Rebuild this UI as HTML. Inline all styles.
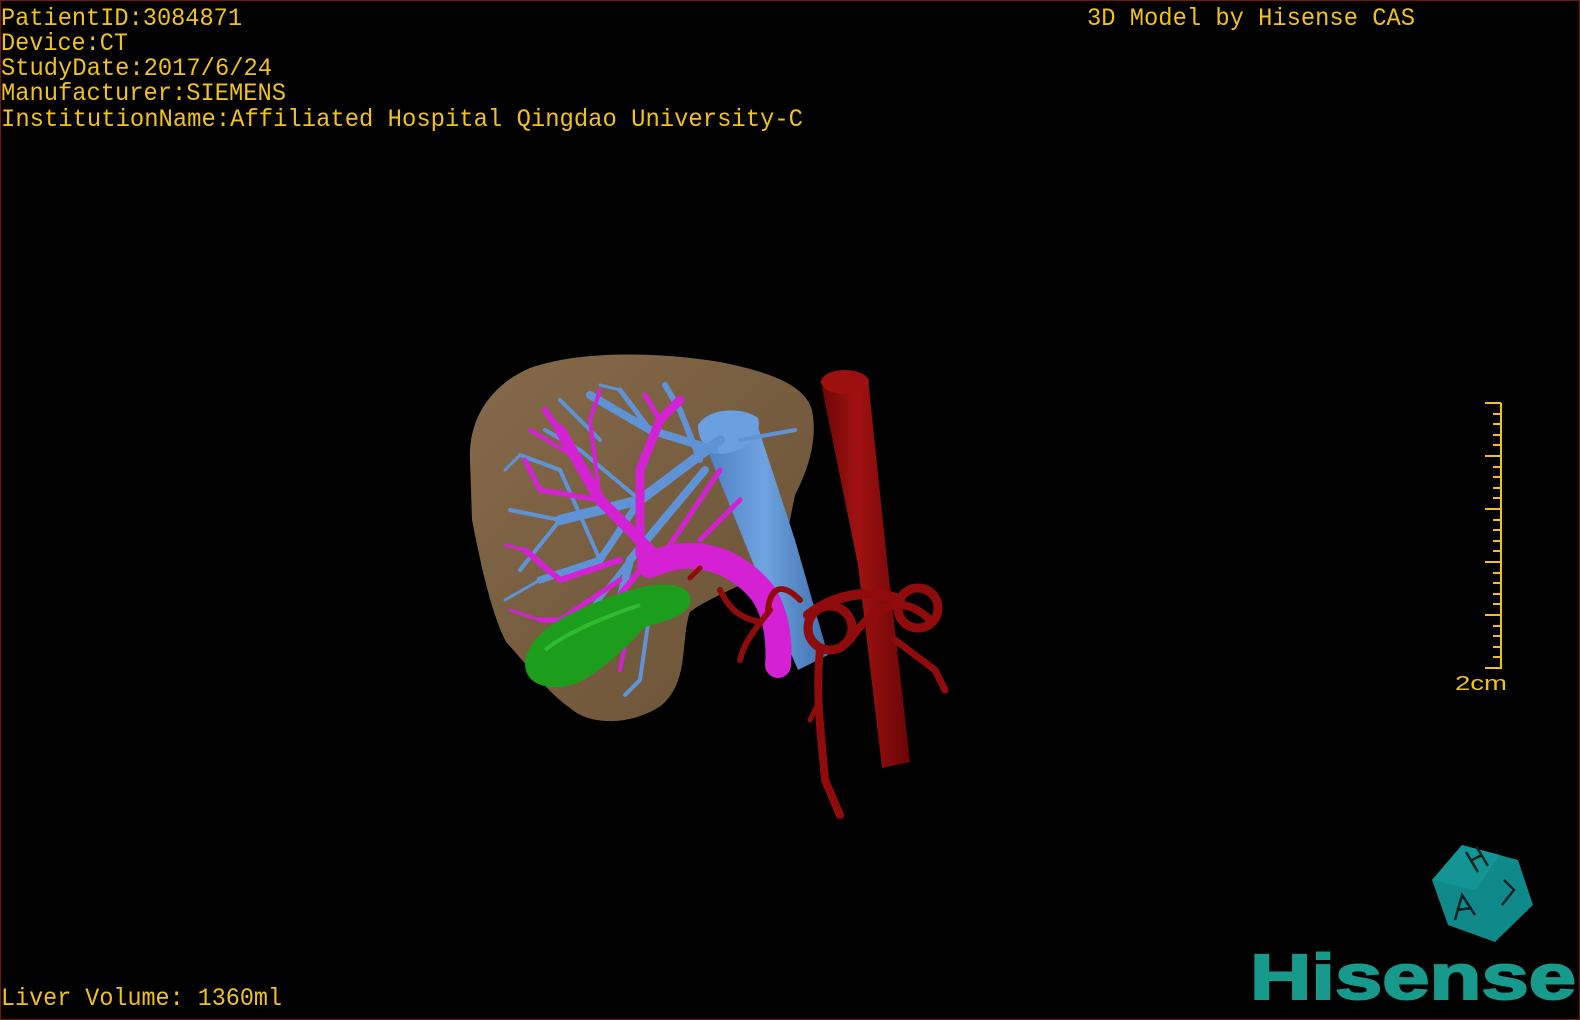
<!DOCTYPE html>
<html><head><meta charset="utf-8"><style>
html,body{margin:0;padding:0;background:#000;}
body{width:1580px;height:1020px;overflow:hidden;position:relative;}
.frame{position:absolute;left:0;top:0;width:1578px;height:1018px;border:1px solid #7a1414;}
svg{position:absolute;left:0;top:0;}
.t{font-family:"Liberation Mono",monospace;font-size:25px;fill:#f2c21c;}
</style></head><body>
<svg width="1580" height="1020" viewBox="0 0 1580 1020">
<defs>
<linearGradient id="liv" x1="0" y1="0" x2="1" y2="1"><stop offset="0" stop-color="#85694a"/><stop offset="1" stop-color="#6a5236"/></linearGradient>
<linearGradient id="ao" x1="0" y1="0" x2="1" y2="0"><stop offset="0" stop-color="#6e0606"/><stop offset="0.4" stop-color="#a01212"/><stop offset="1" stop-color="#6a0505"/></linearGradient>
<linearGradient id="bl" x1="0" y1="0" x2="1" y2="0"><stop offset="0" stop-color="#4a7cc0"/><stop offset="0.5" stop-color="#6fa3e0"/><stop offset="1" stop-color="#3f6fae"/></linearGradient>
</defs>
<text class="t" x="1" y="25" textLength="241" lengthAdjust="spacingAndGlyphs">PatientID:3084871</text>
<text class="t" x="1" y="50" textLength="127" lengthAdjust="spacingAndGlyphs">Device:CT</text>
<text class="t" x="1" y="75" textLength="271" lengthAdjust="spacingAndGlyphs">StudyDate:2017/6/24</text>
<text class="t" x="1" y="100" textLength="285" lengthAdjust="spacingAndGlyphs">Manufacturer:SIEMENS</text>
<text class="t" x="1" y="126" textLength="802" lengthAdjust="spacingAndGlyphs">InstitutionName:Affiliated Hospital Qingdao University-C</text>
<text class="t" x="1087" y="25" textLength="328" lengthAdjust="spacingAndGlyphs">3D Model by Hisense CAS</text>
<text class="t" x="1" y="1005" textLength="281" lengthAdjust="spacingAndGlyphs">Liver Volume: 1360ml</text>

<path d="M470,460 C468,420 490,385 530,368 C580,350 660,352 720,362 C770,372 805,385 812,410 C818,440 808,470 795,495 L782,560 C760,580 712,595 690,612 C680,640 690,680 662,705 C632,726 590,726 570,708 C545,690 530,668 506,642 C490,610 480,560 472,520 Z" fill="url(#liv)"/>

<path d="M700,432 L755,418 L795,540 L828,655 L798,670 L768,600 Z" fill="url(#bl)"/>
<path d="M698,425 C708,408 742,406 758,418 C763,434 746,452 722,454 C706,452 698,440 698,425 Z" fill="#6a9fe0"/>
<g stroke="#5f93d6" fill="none" stroke-linecap="round">
<path d="M720,440 L640,500 L560,520" stroke-width="10"/>
<path d="M640,500 L600,560 L540,580" stroke-width="7"/>
<path d="M715,450 L650,430 L590,395" stroke-width="8"/>
<path d="M650,430 L620,390" stroke-width="5"/>
<path d="M700,460 L680,410 L665,385" stroke-width="6"/>
<path d="M705,470 L630,560 L610,640" stroke-width="8"/>
<path d="M630,560 L575,630 L555,660" stroke-width="5"/>
<path d="M560,520 L510,510" stroke-width="4"/>
<path d="M560,520 L520,570" stroke-width="4"/>
<path d="M600,560 L560,470 L520,455" stroke-width="4"/>
<path d="M640,500 L580,450 L545,430" stroke-width="4"/>
<path d="M740,440 L795,430" stroke-width="4"/>
<path d="M650,610 L640,680 L625,695" stroke-width="4"/>
<path d="M560,400 L600,440" stroke-width="4"/>
<path d="M540,580 L505,600" stroke-width="3"/>
<path d="M620,390 L600,385" stroke-width="3"/>
<path d="M520,455 L505,470" stroke-width="3"/>
</g>
<g stroke="#d321d3" fill="none" stroke-linecap="round">
<path d="M650,565 C695,545 735,560 762,592 C776,612 780,640 778,665" stroke-width="26"/>
<path d="M660,560 L600,500 L560,430" stroke-width="11"/>
<path d="M600,500 L580,460 L545,410" stroke-width="6"/>
<path d="M640,555 L640,470 L660,420 L680,400" stroke-width="9"/>
<path d="M660,420 L645,395" stroke-width="5"/>
<path d="M620,560 L560,580 L525,550" stroke-width="6"/>
<path d="M600,500 L540,490 L525,460" stroke-width="5"/>
<path d="M640,570 L600,620 L585,650" stroke-width="6"/>
<path d="M620,580 L560,620 L540,620" stroke-width="5"/>
<path d="M660,560 L700,500 L720,470" stroke-width="5"/>
<path d="M700,540 L740,500" stroke-width="5"/>
<path d="M580,460 L530,430" stroke-width="4"/>
<path d="M600,500 L590,420 L600,390" stroke-width="4"/>
<path d="M630,620 L620,670" stroke-width="4"/>
<path d="M540,620 L510,610" stroke-width="3"/>
<path d="M525,550 L505,545" stroke-width="3"/>
</g>
<path d="M525,662 C530,630 570,612 610,597 C640,586 680,576 690,596 C695,612 672,620 645,627 C622,652 602,670 580,682 C555,692 524,688 525,662 Z" fill="#1c9e1c"/>
<path d="M545,650 C570,630 610,615 640,605" stroke="#3fcf3f" stroke-width="4" fill="none" opacity="0.6"/>

<path d="M822,388 L868,378 L887,560 L910,762 L882,768 L858,565 Z" fill="url(#ao)"/>
<ellipse cx="845" cy="382" rx="24" ry="12" fill="#9c1010"/>
<g stroke="#900c0c" fill="none" stroke-linecap="round">
<circle cx="830" cy="628" r="22" stroke-width="9"/>
<circle cx="918" cy="608" r="20" stroke-width="9"/>
<path d="M808,615 C840,590 880,590 900,600" stroke-width="10"/>
<path d="M850,640 C870,610 900,590 930,620" stroke-width="8"/>
<path d="M800,600 C780,580 770,590 768,610" stroke-width="6"/>
<path d="M820,650 C815,700 822,740 825,780 L840,815" stroke-width="8"/>
<path d="M820,700 L810,720" stroke-width="5"/>
<path d="M895,640 L935,670 L945,690" stroke-width="7"/>
<path d="M770,610 C755,630 745,640 740,660" stroke-width="6"/>
<path d="M720,590 C730,610 740,618 760,622" stroke-width="6"/>
<path d="M690,578 L700,568" stroke-width="5"/>
</g>

<g stroke="#f2c21c" stroke-width="2">
<line x1="1501" y1="403" x2="1501" y2="669"/>
<line x1="1485" y1="403" x2="1501" y2="403"/>
<line x1="1485" y1="456" x2="1501" y2="456"/>
<line x1="1485" y1="509" x2="1501" y2="509"/>
<line x1="1485" y1="562" x2="1501" y2="562"/>
<line x1="1485" y1="615" x2="1501" y2="615"/>
<line x1="1485" y1="668" x2="1501" y2="668"/>
<path d="M1493,414H1501M1493,424H1501M1493,435H1501M1493,445H1501M1493,467H1501M1493,477H1501M1493,488H1501M1493,498H1501M1493,520H1501M1493,530H1501M1493,541H1501M1493,551H1501M1493,573H1501M1493,583H1501M1493,594H1501M1493,604H1501M1493,626H1501M1493,636H1501M1493,647H1501M1493,657H1501"/>
</g>
<text x="1455" y="690" font-family="Liberation Sans,sans-serif" font-size="20" fill="#f2c21c" textLength="52" lengthAdjust="spacingAndGlyphs">2cm</text>

<polygon points="1432,880 1462,845 1518,860 1533,905 1495,942 1448,925" fill="#10898a"/>
<polygon points="1432,880 1462,845 1500,855 1475,890" fill="#139495"/>
<g stroke="#022" stroke-width="2.5" fill="none">
<path d="M1466,852 L1478,872 M1476,846 L1488,866 M1470,861 L1482,855"/>
<path d="M1504,880 L1514,890 L1502,905"/>
<path d="M1455,920 L1462,895 L1475,915 M1457,910 L1472,908"/>
</g>

<text x="1250" y="999" font-family="Liberation Sans,sans-serif" font-weight="bold" font-size="64" fill="#179a8b" stroke="#179a8b" stroke-width="2" textLength="326" lengthAdjust="spacingAndGlyphs">Hisense</text>
</svg>
<div class="frame"></div>
</body></html>
